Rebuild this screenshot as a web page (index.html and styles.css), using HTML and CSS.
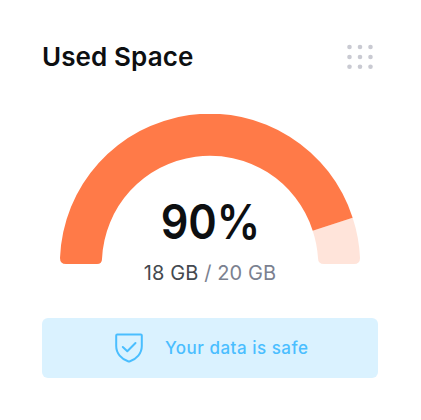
FILE: index.html
```html
<!DOCTYPE html>
<html lang="en">
<head>
    <meta charset="UTF-8">
    <title>Used Space</title>
    <link rel="stylesheet" href="styles.css">
</head>
<body>
    <div class="card">
        <div class="header">
            <h1>Used Space</h1>
            <svg class="grid-icon" width="28" height="28" viewBox="0 0 28 28">
                <circle cx="3.5" cy="4" r="2.3"/>
                <circle cx="14" cy="4" r="2.3"/>
                <circle cx="24.5" cy="4" r="2.3"/>
                <circle cx="3.5" cy="14" r="2.3"/>
                <circle cx="14" cy="14" r="2.3"/>
                <circle cx="24.5" cy="14" r="2.3"/>
                <circle cx="3.5" cy="23.7" r="2.3"/>
                <circle cx="14" cy="23.7" r="2.3"/>
                <circle cx="24.5" cy="23.7" r="2.3"/>
            </svg>
        </div>

        <div class="gauge">
            <svg width="300" height="150" viewBox="0 0 300 150">
                <path class="gauge-rest" d="M292.66 103.65 A150 150 0 0 1 300 144 Q300 150 294 150 H264 Q258 150 258 144 A108 108 0 0 0 252.71 116.63 Z"/>
                <path class="gauge-used" d="M0 144 A150 150 0 0 1 292.66 103.65 L252.71 116.63 A108 108 0 0 0 42 145 Q42 150 37 150 H6 Q0 150 0 144 Z"/>
            </svg>
            <div class="percent">90%</div>
        </div>

        <div class="usage"><span class="used">18 GB</span> / 20 GB</div>

        <div class="notice">
            <svg class="shield-icon" width="28" height="30" viewBox="0 0 28 30">
                <path d="M2.2 1.5 H25.8 Q26.8 1.5 26.8 2.5 V13 C26.8 20.5 21.5 26 15 28.2 Q14 28.6 13 28.2 C6.5 26 1.2 20.5 1.2 13 V2.5 Q1.2 1.5 2.2 1.5 Z"/>
                <path d="M7.8 14 L12.3 18.2 L20.5 10"/>
            </svg>
            <span class="notice-text">Your data is safe</span>
        </div>
    </div>
</body>
</html>
```
FILE: styles.css
```css
* {
    margin: 0;
    padding: 0;
    box-sizing: border-box;
}

body {
    background-color: #ffffff;
    font-family: Inter, "Liberation Sans", sans-serif;
}

.card {
    width: 421px;
    height: 420px;
    padding: 42px 43px 0 42px;
}

.header {
    display: flex;
    justify-content: space-between;
    align-items: center;
    height: 30px;
    padding-right: 4px;
}

.header h1 {
    padding-bottom: 2px;
    font-size: 26px;
    font-weight: 600;
    letter-spacing: 0.1px;
    color: #0d0f11;
}

.grid-icon {
    fill: #c9cad2;
}

.gauge {
    display: grid;
    width: 300px;
    height: 150px;
    margin: 42px 0 0 18px;
}

.gauge svg,
.percent {
    grid-area: 1 / 1;
}

.gauge-used {
    fill: #ff7a48;
}

.gauge-rest {
    fill: #ffe4da;
}

.percent {
    align-self: end;
    padding: 0 0 13px 1px;
    font-size: 48px;
    line-height: 58px;
    font-weight: 600;
    text-align: center;
    color: #0d0f11;
    transform: scaleX(0.9);
}

.usage {
    width: 336px;
    margin-top: -3px;
    font-size: 20px;
    line-height: 24px;
    letter-spacing: 0.1px;
    text-align: center;
    color: #7b8190;
}

.used {
    color: #44494f;
}

.notice {
    display: flex;
    align-items: center;
    width: 336px;
    height: 60px;
    margin-top: 33px;
    padding-left: 73px;
    background-color: #daf2ff;
    border-radius: 6px;
}

.shield-icon {
    margin-right: 22px;
    fill: none;
    stroke: #4abeff;
    stroke-width: 2;
    stroke-linecap: round;
    stroke-linejoin: round;
}

.notice-text {
    font-size: 17px;
    font-weight: 500;
    letter-spacing: 0.5px;
    color: #4abeff;
}
```
